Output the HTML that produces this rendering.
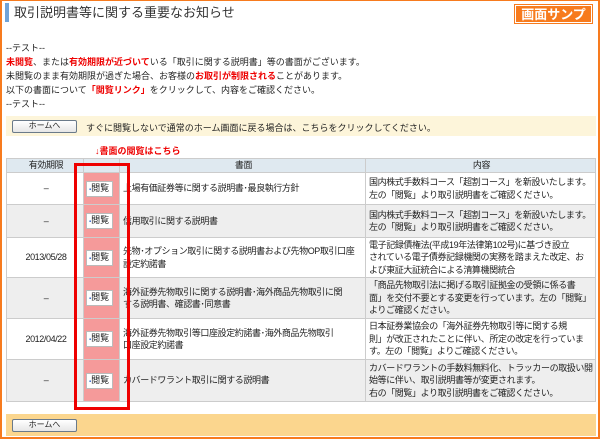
<!DOCTYPE html>
<html><head><meta charset="utf-8"><style>
*{margin:0;padding:0;box-sizing:border-box}
body{width:600px;height:439px;overflow:hidden;background:#fff;font-family:"Liberation Sans","Noto Sans CJK JP",sans-serif;color:#222;font-size:9px;position:relative}
.frame{position:absolute;left:0;top:0;width:600px;height:439px;border:2px solid #f77b1e;border-top-width:1px}
.bar{position:absolute;left:5px;top:3px;width:4px;height:19px;background:#6fa3d8}
.title{position:absolute;left:14px;top:4px;font-size:13px;color:#333;line-height:17px}
.badge{position:absolute;left:515px;top:5px;width:77px;height:18px;background:#f77b1e;color:#fff;font-weight:bold;font-size:13px;line-height:18px;text-align:center;border:1px solid #fff;outline:1px solid #f77b1e}
.msg{position:absolute;left:6px;top:41px;line-height:14px;font-size:9px}
.r{color:#e00;font-weight:bold}
.beige{position:absolute;left:6px;top:116px;width:590px;height:20px;background:#fdf5da}
.btn{position:absolute;background:linear-gradient(#fff,#e6e6e6);border:1px solid #6a7a8a;border-radius:2px;font-size:8px;text-align:center;line-height:10px}
.lab{position:absolute;left:95px;top:144px;color:#e00;font-weight:bold;font-size:9px}
table{position:absolute;left:6px;top:158px;width:590px;border-collapse:collapse;font-size:9px;line-height:12.5px;table-layout:fixed;letter-spacing:-0.4px}
td,th{border:1px solid #ccc;padding:0 1px 0 3px;vertical-align:middle;overflow:hidden}
th{background:#dfe9f0;font-weight:normal;height:14px}
tr.g td{background:#eee}
td.c{text-align:center}
td.nw{white-space:nowrap}
td.p{background:#f59a9a!important;padding:0 2px;white-space:nowrap}
.v{display:inline-block;background:#fff;border:1px solid #bbb;font-size:9px;line-height:12px;padding:0 3px 0 2px;letter-spacing:0}
.v:before{content:"▪";color:#36c;font-size:6px}
.redbox{position:absolute;left:74px;top:163px;width:56px;height:247px;border:3px solid #e00}
.bottom{position:absolute;left:6px;top:414px;width:590px;height:22px;background:#fbd68e}
</style></head><body>
<div class="frame"></div>
<div class="bar"></div>
<div class="title">取引説明書等に関する重要なお知らせ</div>
<div class="badge">画面サンプル</div>
<div class="msg">--テスト--<br><span class="r">未閲覧</span>、または<span class="r">有効期限が近づいて</span>いる「取引に関する説明書」等の書面がございます。<br>未閲覧のまま有効期限が過ぎた場合、お客様の<span class="r">お取引が制限される</span>ことがあります。<br>以下の書面について<span class="r">「閲覧リンク」</span>をクリックして、内容をご確認ください。<br>--テスト--</div>
<div class="beige"></div>
<div class="btn" style="left:12px;top:120px;width:65px;height:13px">ホームへ</div>
<div style="position:absolute;left:86px;top:121px;font-size:9px">すぐに閲覧しないで通常のホーム画面に戻る場合は、こちらをクリックしてください。</div>
<div class="lab">↓書面の閲覧はこちら</div>
<table>
<colgroup><col style="width:77px"><col style="width:36px"><col style="width:246px"><col></colgroup>
<tr style="height:14px"><th>有効期限</th><th></th><th>書面</th><th>内容</th></tr>
<tr style="height:32px"><td class="c">–</td><td class="p"><span class="v">閲覧</span></td><td>上場有価証券等に関する説明書･最良執行方針</td><td class="nw">国内株式手数料コース「超割コース」を新設いたします。<br>左の「閲覧」より取引説明書をご確認ください。</td></tr>
<tr class="g" style="height:33px"><td class="c">–</td><td class="p"><span class="v">閲覧</span></td><td>信用取引に関する説明書</td><td class="nw">国内株式手数料コース「超割コース」を新設いたします。<br>左の「閲覧」より取引説明書をご確認ください。</td></tr>
<tr style="height:40px"><td class="c">2013/05/28</td><td class="p"><span class="v">閲覧</span></td><td>先物･オプション取引に関する説明書および先物OP取引口座<br>設定約諾書</td><td class="nw">電子記録債権法(平成19年法律第102号)に基づき設立<br>されている電子債券記録機関の実務を踏まえた改定、お<br>よび東証大証統合による清算機関統合</td></tr>
<tr class="g" style="height:41px"><td class="c">–</td><td class="p"><span class="v">閲覧</span></td><td>海外証券先物取引に関する説明書･海外商品先物取引に関<br>する説明書、確認書･同意書</td><td class="nw">「商品先物取引法に掲げる取引証拠金の受領に係る書<br>面」を交付不要とする変更を行っています。左の「閲覧」<br>よりご確認ください。</td></tr>
<tr style="height:41px"><td class="c">2012/04/22</td><td class="p"><span class="v">閲覧</span></td><td>海外証券先物取引等口座設定約諾書･海外商品先物取引<br>口座設定約諾書</td><td class="nw">日本証券業協会の「海外証券先物取引等に関する規<br>則」が改正されたことに伴い、所定の改定を行っていま<br>す。左の「閲覧」よりご確認ください。</td></tr>
<tr class="g" style="height:42px"><td class="c">–</td><td class="p"><span class="v">閲覧</span></td><td>カバードワラント取引に関する説明書</td><td class="nw">カバードワラントの手数料無料化、トラッカーの取扱い開<br>始等に伴い、取引説明書等が変更されます。<br>右の「閲覧」より取引説明書をご確認ください。</td></tr>
</table>
<div class="redbox"></div>
<div class="bottom"></div>
<div class="btn" style="left:12px;top:419px;width:65px;height:13px">ホームへ</div>
</body></html>
